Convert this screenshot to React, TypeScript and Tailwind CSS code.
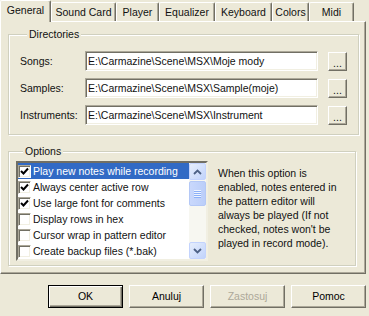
import { ReactNode } from 'react';

const tabs = [
  { label: 'General', w: 'w-[51px]', active: true },
  { label: 'Sound Card', w: 'w-[65px]' },
  { label: 'Player', w: 'w-[43px]' },
  { label: 'Equalizer', w: 'w-[56px]' },
  { label: 'Keyboard', w: 'w-[57px]' },
  { label: 'Colors', w: 'w-[37px]' },
  { label: 'Midi', w: 'w-[45px]' },
];

const dirs = [
  { label: 'Songs:', path: 'E:\\Carmazine\\Scene\\MSX\\Moje mody' },
  { label: 'Samples:', path: 'E:\\Carmazine\\Scene\\MSX\\Sample(moje)' },
  { label: 'Instruments:', path: 'E:\\Carmazine\\Scene\\MSX\\Instrument' },
];

const options = [
  { label: 'Play new notes while recording', checked: true, selected: true },
  { label: 'Always center active row', checked: true },
  { label: 'Use large font for comments', checked: true },
  { label: 'Display rows in hex', checked: false },
  { label: 'Cursor wrap in pattern editor', checked: false },
  { label: 'Create backup files (*.bak)', checked: false },
];

function Checkbox({ checked }: { checked: boolean }) {
  return (
    <span className="w-[13px] h-[13px] shrink-0 bg-white border border-t-[#ACA899] border-l-[#ACA899] border-r-white border-b-white shadow-[inset_1px_1px_0_#716F64,inset_-1px_-1px_0_#F1EFE2] flex items-center justify-center">
      {checked && (
        <svg width="9" height="9" viewBox="0 0 9 9">
          <path d="M1 4 L3.5 6.5 L8 1.5" stroke="#000" strokeWidth="2" fill="none" />
        </svg>
      )}
    </span>
  );
}

function ScrollButton({ dir }: { dir: 'up' | 'down' }) {
  return (
    <div className="h-[17px] w-[17px] rounded-[2px] border border-[#C3D3FD] bg-gradient-to-br from-[#E6EEFC] to-[#C1D3FB] flex items-center justify-center">
      <svg width="9" height="6" viewBox="0 0 9 6">
        <path
          d={dir === 'up' ? 'M1 5 L4.5 1.5 L8 5' : 'M1 1 L4.5 4.5 L8 1'}
          stroke="#4D6185"
          strokeWidth="1.8"
          fill="none"
        />
      </svg>
    </div>
  );
}

function Button({ children, isDefault, disabled }: { children: ReactNode; isDefault?: boolean; disabled?: boolean }) {
  const frame = isDefault
    ? 'border border-black shadow-[inset_1px_1px_0_#fff,inset_-1px_-1px_0_#716F64,inset_-2px_-2px_0_#ACA899]'
    : 'border border-t-white border-l-white border-r-[#716F64] border-b-[#716F64] shadow-[inset_-1px_-1px_0_#ACA899]';
  return (
    <button
      className={`w-[75px] h-[23px] bg-[#ECE9D8] flex items-center justify-center ${frame} ${
        disabled ? 'text-[#ACA899]' : 'text-black'
      }`}
    >
      {children}
    </button>
  );
}

function Group({ title, className, children }: { title: string; className?: string; children: ReactNode }) {
  return (
    <fieldset
      className={`border border-[#D0D0BF] shadow-[inset_1px_1px_0_#fff,1px_1px_0_#fff] rounded-none ${className ?? ''}`}
    >
      <legend className="ml-[7px] px-[2px] leading-[13px] bg-[#ECE9D8]">{title}</legend>
      {children}
    </fieldset>
  );
}

export default function App() {
  return (
    <div className="w-[369px] h-[316px] bg-[#ECE9D8] text-[#111] text-[10.5px] leading-[13px] font-['Liberation_Sans',Arial,sans-serif] overflow-hidden select-none">
      <div className="flex items-end h-[21px]">
        {tabs.map((t) => (
          <div
            key={t.label}
            className={`${t.w} flex items-center justify-center border-t border-l border-t-white border-l-white border-r border-r-[#716F64] rounded-t-[2px] shadow-[inset_-1px_0_0_#ACA899] ${
              t.active ? 'h-[22px] -mb-[1px] relative z-10 bg-[#ECE9D8] pb-[2px]' : 'h-[19px]'
            }`}
          >
            {t.label}
          </div>
        ))}
      </div>

      <div className="w-[366px] h-[253px] border border-t-white border-l-white border-r-[#716F64] border-b-[#716F64] shadow-[inset_-1px_-1px_0_#ACA899] pl-[7px] pr-[9px] pt-[6px]">
        <Group title="Directories" className="px-[11px] pt-[10px] pb-[9px]">
          <div className="flex flex-col gap-[7px]">
            {dirs.map((d) => (
              <div key={d.label} className="flex items-center h-[20px]">
                <span className="w-[65px]">{d.label}</span>
                <div className="w-[233px] h-[20px] bg-white border border-t-[#ACA899] border-l-[#ACA899] border-r-white border-b-white shadow-[inset_1px_1px_0_#716F64,inset_-1px_-1px_0_#F1EFE2] flex items-center pl-[2px] whitespace-nowrap overflow-hidden">
                  {d.path}
                </div>
                <button className="ml-[10px] w-[19px] h-[19px] bg-[#ECE9D8] border border-t-white border-l-white border-r-[#716F64] border-b-[#716F64] shadow-[inset_-1px_-1px_0_#ACA899] flex items-end justify-center pb-[3px] leading-[8px]">
                  ...
                </button>
              </div>
            ))}
          </div>
        </Group>

        <Group title="Options" className="mt-[10px] pl-[7px] pt-[3px] pb-[4px]">
          <div className="flex">
            <div className="w-[192px] h-[100px] bg-white border-2 border-t-[#716F64] border-l-[#716F64] border-r-[#F1EFE2] border-b-[#F1EFE2] flex">
              <div className="flex-1 flex flex-col">
                {options.map((o) => (
                  <div
                    key={o.label}
                    className={`h-[16px] flex items-center gap-[2px] whitespace-nowrap overflow-hidden ${
                      o.selected ? 'bg-[#316AC5] text-white' : ''
                    }`}
                  >
                    <Checkbox checked={o.checked} />
                    <span>{o.label}</span>
                  </div>
                ))}
              </div>
              <div className="w-[17px] bg-[#F7F7F1] flex flex-col justify-between">
                <div className="flex flex-col gap-[1px]">
                  <ScrollButton dir="up" />
                  <div className="h-[25px] w-[17px] rounded-[2px] border border-[#B4C8F6] bg-gradient-to-r from-[#C9D8FC] to-[#BBCEF9] flex flex-col items-center justify-center gap-[1px]">
                    {[0, 1, 2, 3].map((i) => (
                      <div key={i} className="w-[7px] h-[1px] bg-[#EEF4FE] shadow-[0_1px_0_#8CB0F8]" />
                    ))}
                  </div>
                </div>
                <ScrollButton dir="down" />
              </div>
            </div>
            <p className="ml-[10px] mt-[5px] leading-[14px] whitespace-nowrap">
              When this option is
              <br />
              enabled, notes entered in
              <br />
              the pattern editor will
              <br />
              always be played (If not
              <br />
              checked, notes won't be
              <br />
              played in record mode).
            </p>
          </div>
        </Group>
      </div>

      <div className="flex justify-end gap-[6px] pr-[3px] mt-[11px]">
        <Button isDefault>OK</Button>
        <Button>Anuluj</Button>
        <Button disabled>Zastosuj</Button>
        <Button>Pomoc</Button>
      </div>
    </div>
  );
}
